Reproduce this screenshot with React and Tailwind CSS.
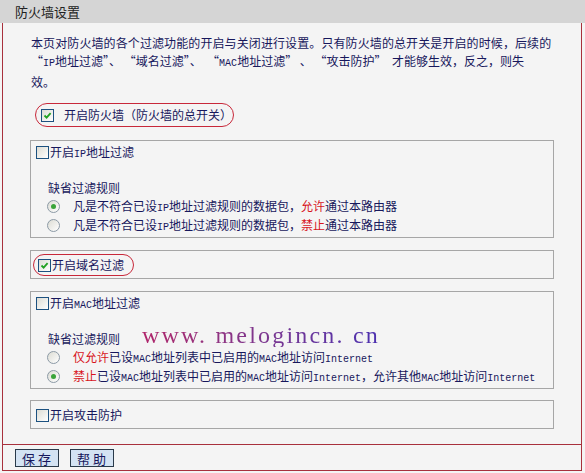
import React from 'react'

function Lat({ children }) {
  return <span className="font-['Liberation_Mono',monospace] text-[10px]">{children}</span>
}

function Red({ children }) {
  return <span className="text-[#d8141c]">{children}</span>
}

function CheckBox({ checked }) {
  return (
    <span className="flex h-[13px] w-[13px] shrink-0 items-center justify-center border border-[#1c5180] bg-gradient-to-br from-[#dcdcd4] to-white">
      {checked && (
        <svg viewBox="0 0 11 11" className="h-[11px] w-[11px]">
          <path d="M2.5 5.5 L4.6 7.6 L8.6 3.2" fill="none" stroke="#21a121" strokeWidth="1.8" />
        </svg>
      )}
    </span>
  )
}

function Radio({ checked }) {
  return (
    <span className="flex h-[13px] w-[13px] shrink-0 items-center justify-center rounded-full border border-[#8c9aa6] bg-gradient-to-br from-[#dcdcd4] to-white">
      {checked && <span className="h-[5px] w-[5px] rounded-full bg-[#3aa43a]" />}
    </span>
  )
}

function RadioRow({ checked, children }) {
  return (
    <div className="flex h-[19px] items-center pl-[16px] whitespace-nowrap">
      <Radio checked={checked} />
      <span className="ml-[13px]">{children}</span>
    </div>
  )
}

function CheckRow({ label }) {
  return (
    <div className="flex h-[22px] items-center pl-[5px]">
      <CheckBox />
      <span className="ml-[1px]">{label}</span>
    </div>
  )
}

function Btn({ first, second }) {
  return (
    <button className="flex h-[18px] w-[44px] items-center gap-[3px] border border-[#2a3a4a] bg-[#d4e3f3] pl-[6px] text-[13px] leading-none text-[#17175c]">
      <span>{first}</span>
      <span>{second}</span>
    </button>
  )
}

export default function App() {
  return (
    <div className="h-[473px] w-[585px] overflow-hidden bg-[#f4f4f4] font-['Noto_Sans_CJK_SC',sans-serif] text-[12px] text-[#17175c]">
      {/* title bar */}
      <div className="flex h-[23px] items-center bg-[#d5d5d5] pl-[15px] text-[13px] text-[#222]">
        防火墙设置
      </div>

      <div className="ml-[2px] w-[580px] border-x border-b border-[#a8303c]">
        <div className="h-[422px] border-b border-[#a8303c] px-[27px] pt-[11px]">
          <div className="pl-[1px] leading-[18px] whitespace-pre">
            <div className="tracking-[0.1px]">本页对防火墙的各个过滤功能的开启与关闭进行设置。只有防火墙的总开关是开启的时候，后续的</div>
            <div>
              “<Lat>IP</Lat>地址过滤”、 “域名过滤”、  “<Lat>MAC</Lat>地址过滤” 、 “攻击防护”  才能够生效，反之，则失
            </div>
            <div>效。</div>
          </div>

          {/* master switch */}
          <div className="ml-[5px] mt-[12px] flex h-[24px] w-[199px] items-center rounded-full border border-[#c8283a] pl-[5px]">
            <CheckBox checked />
            <span className="ml-[10px] whitespace-nowrap">开启防火墙（防火墙的总开关）</span>
          </div>

          {/* IP filter */}
          <div className="mt-[13px] h-[98px] border border-[#a6a6a6]">
            <CheckRow label={<>开启<Lat>IP</Lat>地址过滤</>} />
            <div className="h-[15px]" />
            <div className="flex h-[19px] items-center pl-[17px]">缺省过滤规则</div>
            <RadioRow checked>
              凡是不符合已设<Lat>IP</Lat>地址过滤规则的数据包，<Red>允许</Red>通过本路由器
            </RadioRow>
            <RadioRow>
              凡是不符合已设<Lat>IP</Lat>地址过滤规则的数据包，<Red>禁止</Red>通过本路由器
            </RadioRow>
          </div>

          {/* domain filter */}
          <div className="mt-[12px] h-[29px] border border-[#a6a6a6] pl-[2px] pt-[3px]">
            <div className="flex h-[22px] w-[101px] items-center rounded-full border border-[#c8283a] pl-[4px]">
              <CheckBox checked />
              <span className="ml-[1px] whitespace-nowrap">开启域名过滤</span>
            </div>
          </div>

          {/* MAC filter */}
          <div className="relative mt-[12px] h-[98px] border border-[#a6a6a6]">
            <CheckRow label={<>开启<Lat>MAC</Lat>地址过滤</>} />
            <div className="h-[15px]" />
            <div className="flex h-[19px] items-center pl-[17px]">缺省过滤规则</div>
            <RadioRow>
              <Red>仅允许</Red>已设<Lat>MAC</Lat>地址列表中已启用的<Lat>MAC</Lat>地址访问<Lat>Internet</Lat>
            </RadioRow>
            <RadioRow checked>
              <Red>禁止</Red>已设<Lat>MAC</Lat>地址列表中已启用的<Lat>MAC</Lat>地址访问<Lat>Internet</Lat>，允许其他<Lat>MAC</Lat>地址访问<Lat>Internet</Lat>
            </RadioRow>
            <span className="absolute left-[111px] top-[31px] bg-gradient-to-r from-[#b0246a] to-[#4b2fb0] bg-clip-text font-['Liberation_Serif',serif] text-[24px] leading-none tracking-[2.2px] whitespace-nowrap text-transparent">
              www. melogincn. cn
            </span>
          </div>

          {/* attack protection */}
          <div className="mt-[11px] h-[29px] border border-[#a6a6a6] pt-[3px]">
            <div className="flex h-[22px] items-center pl-[5px]">
              <CheckBox />
              <span className="ml-[1px]">开启攻击防护</span>
            </div>
          </div>
        </div>

        {/* buttons */}
        <div className="flex h-[25px] gap-[11px] pl-[12px] pt-[4px]">
          <Btn first="保" second="存" />
          <Btn first="帮" second="助" />
        </div>
      </div>
    </div>
  )
}
